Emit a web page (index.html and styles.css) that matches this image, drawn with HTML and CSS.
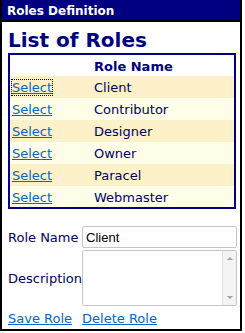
FILE: index.html
```html
<!DOCTYPE html>
<html lang="en">
<head>
  <meta charset="UTF-8" />
  <title>Roles Definition</title>
  <link rel="stylesheet" href="styles.css">
</head>
<body>
  <div class="painel">
    <div class="titulo">Roles Definition</div>
    <div class="conteudo">
      <h1>List of Roles</h1>
      <table class="lista">
        <tr class="cabecalho">
          <th class="col-sel"></th>
          <th>Role Name</th>
        </tr>
        <tr class="impar">
          <td class="col-sel"><a href="#" class="foco">Select</a></td>
          <td>Client</td>
        </tr>
        <tr class="par">
          <td class="col-sel"><a href="#">Select</a></td>
          <td>Contributor</td>
        </tr>
        <tr class="impar">
          <td class="col-sel"><a href="#">Select</a></td>
          <td>Designer</td>
        </tr>
        <tr class="par">
          <td class="col-sel"><a href="#">Select</a></td>
          <td>Owner</td>
        </tr>
        <tr class="impar">
          <td class="col-sel"><a href="#">Select</a></td>
          <td>Paracel</td>
        </tr>
        <tr class="par">
          <td class="col-sel"><a href="#">Select</a></td>
          <td>Webmaster</td>
        </tr>
      </table>

      <table class="form">
        <tr>
          <td class="rotulo">Role Name</td>
          <td><input type="text" value="Client" /></td>
        </tr>
        <tr>
          <td class="rotulo">Description</td>
          <td>
            <div class="caixa-texto">
              <textarea></textarea>
              <div class="rolagem">
                <span class="seta-cima"></span>
                <span class="seta-baixo"></span>
              </div>
            </div>
          </td>
        </tr>
      </table>

      <div class="acoes">
        <a href="#">Save Role</a>
        <a href="#">Delete Role</a>
      </div>
    </div>
  </div>
</body>
</html>
```

FILE: styles.css
```css
* {
  margin: 0;
  padding: 0;
  box-sizing: border-box;
}
body {
  font-family: 'DejaVu Sans', Verdana, sans-serif;
  font-size: 13px;
  background: white;
  color: #000066;
}
.painel {
  width: 242px;
  height: 331px;
  border: 2px solid #000;
  border-top: none;
}
.titulo {
  height: 22px;
  padding: 4px 5px 0;
  background: #000080;
  color: white;
  font-size: 12px;
  font-weight: bold;
  border-bottom: 2px solid #000;
}
.conteudo {
  padding: 0 0 0 6px;
}
h1 {
  font-size: 20px;
  line-height: 24px;
  color: #000080;
  margin: 6px 0 1px;
}
a {
  color: #0066cc;
}
.lista {
  width: 228px;
  border: 2px solid #000080;
  border-collapse: collapse;
}
.lista th, .lista td {
  height: 22px;
  padding: 1px 2px 0;
  text-align: left;
  vertical-align: middle;
  white-space: nowrap;
}
.lista th {
  color: #000080;
  font-weight: bold;
}
.col-sel {
  width: 83px;
}
.cabecalho {
  background: white;
}
.impar {
  background: #fcf1c9;
}
.par {
  background: #fffee9;
}
.foco {
  outline: 1px dotted #000;
  outline-offset: 0;
}
.form {
  margin-top: 17px;
  border-collapse: collapse;
}
.form td {
  padding: 0 0 2px;
  vertical-align: middle;
}
.rotulo {
  width: 73px;
  white-space: nowrap;
}
input, textarea {
  font-family: 'Liberation Sans', Arial, sans-serif;
  font-size: 13px;
  color: #000;
}
input {
  display: block;
  width: 155px;
  height: 22px;
  padding: 0 3px;
  border: 1px solid #c2c4c8;
  border-radius: 2px;
}
.caixa-texto {
  display: flex;
  width: 155px;
  height: 56px;
  border: 1px solid #c2c4c8;
  border-radius: 2px;
}
textarea {
  flex: 1;
  border: none;
  outline: none;
  resize: none;
  overflow: hidden;
}
.rolagem {
  width: 14px;
  background: #f3f3f3;
  border-left: 1px solid #e4e4e4;
  display: flex;
  flex-direction: column;
  justify-content: space-between;
  align-items: center;
  padding: 6px 0;
}
.seta-cima, .seta-baixo {
  width: 0;
  height: 0;
  border-left: 3px solid transparent;
  border-right: 3px solid transparent;
}
.seta-cima {
  border-bottom: 3px solid #a0a0a0;
}
.seta-baixo {
  border-top: 3px solid #a0a0a0;
}
.acoes {
  display: flex;
  gap: 10px;
  margin-top: 3px;
}
```
